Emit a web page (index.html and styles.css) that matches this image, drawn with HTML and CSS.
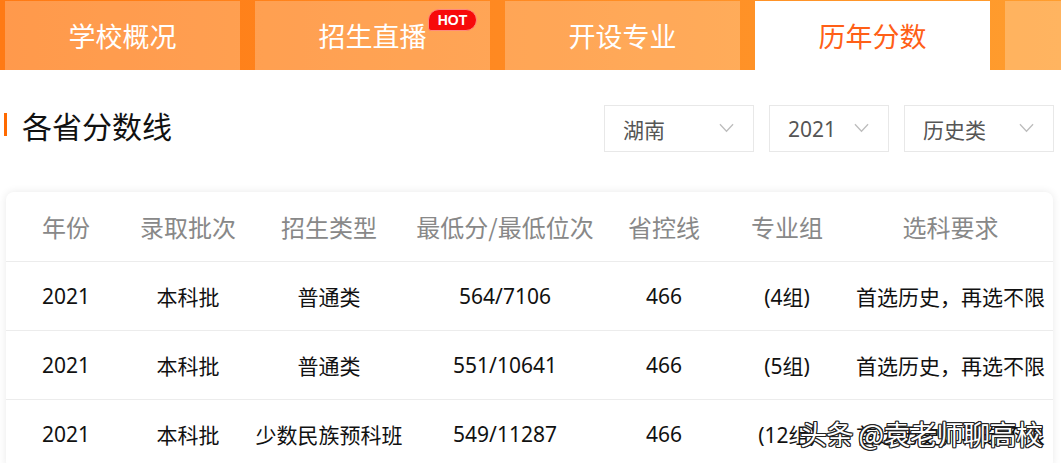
FILE: index.html
```html
<!DOCTYPE html>
<html lang="zh-CN">
<head>
<meta charset="utf-8">
<title>历年分数</title>
<link rel="stylesheet" href="styles.css">
</head>
<body>
<nav class="tabs">
  <div class="tab">学校概况</div>
  <div class="tab">招生直播<span class="hot">HOT</span></div>
  <div class="tab">开设专业</div>
  <div class="tab active">历年分数</div>
  <div class="tab"></div>
</nav>

<section class="head">
  <h2 class="title">各省分数线</h2>
  <div class="filters">
    <div class="select w150"><span>湖南</span><svg class="chev" viewBox="0 0 16 10"><path d="M1 1 L8 8.5 L15 1"/></svg></div>
    <div class="select w120"><span>2021</span><svg class="chev" viewBox="0 0 16 10"><path d="M1 1 L8 8.5 L15 1"/></svg></div>
    <div class="select w150"><span>历史类</span><svg class="chev" viewBox="0 0 16 10"><path d="M1 1 L8 8.5 L15 1"/></svg></div>
  </div>
</section>

<section class="card">
  <div class="row hdr">
    <div>年份</div><div>录取批次</div><div>招生类型</div><div>最低分/最低位次</div><div>省控线</div><div>专业组</div><div>选科要求</div>
  </div>
  <div class="row">
    <div>2021</div><div>本科批</div><div>普通类</div><div>564/7106</div><div>466</div><div>(4组)</div><div>首选历史，再选不限</div>
  </div>
  <div class="row">
    <div>2021</div><div>本科批</div><div>普通类</div><div>551/10641</div><div>466</div><div>(5组)</div><div>首选历史，再选不限</div>
  </div>
  <div class="row">
    <div>2021</div><div>本科批</div><div>少数民族预科班</div><div>549/11287</div><div>466</div><div>(12组)</div><div>首选历史，再选不限</div>
  </div>
</section>

<div class="watermark">头条 @袁老师聊高校</div>
</body>
</html>
```

FILE: styles.css
```css
* { box-sizing: border-box; margin: 0; padding: 0; }

html, body {
  width: 1061px;
  height: 463px;
  overflow: hidden;
  background: #fff;
}

body {
  position: relative;
  font-family: "Noto Sans", "Noto Sans CJK SC", sans-serif;
  color: #222;
}

.tabs {
  display: flex;
  gap: 15px;
  height: 70px;
  padding: 1px 0 0 5px;
  overflow: hidden;
  background: linear-gradient(90deg, #ff7a14 0%, #ff8a22 50%, #ff9d2e 100%);
}

.tab {
  position: relative;
  flex: 0 0 235px;
  height: 69px;
  display: flex;
  align-items: center;
  justify-content: center;
  background: rgba(255, 255, 255, 0.24);
  color: #fff;
  font-family: "Noto Sans CJK SC", sans-serif;
  font-size: 27px;
}

.tab.active {
  background: #fff;
  color: #ff5f17;
}

.hot {
  position: absolute;
  left: 173px;
  top: 8px;
  width: 49px;
  height: 22px;
  display: flex;
  align-items: center;
  justify-content: center;
  background: #f70a0a;
  border: 1px solid #ff8a7a;
  border-radius: 11px 11px 11px 3px;
  color: #fff;
  font-family: "Liberation Sans", sans-serif;
  font-weight: bold;
  font-size: 14px;
}

.head {
  display: flex;
  align-items: center;
  justify-content: space-between;
  height: 47px;
  margin-top: 35px;
  padding: 0 7px 0 4px;
}

.title {
  display: flex;
  align-items: center;
  font-family: "Noto Sans CJK SC", sans-serif;
  font-weight: normal;
  font-size: 30px;
  color: #111;
  margin-top: -8px;
}

.title::before {
  content: "";
  width: 3px;
  height: 23px;
  background: #ff6a00;
  margin-right: 15px;
}

.filters {
  display: flex;
  gap: 15px;
}

.select {
  display: flex;
  align-items: center;
  justify-content: space-between;
  height: 47px;
  padding: 0 19px 0 18px;
  border: 1px solid #e8e8e8;
  color: #555;
  font-family: "Noto Sans", "Noto Sans CJK SC", sans-serif;
  font-size: 21px;
}

.w150 { width: 150px; }
.w120 { width: 120px; }

.chev {
  width: 15px;
  height: 10px;
  fill: none;
  stroke: #bdbdbd;
  stroke-width: 1.4;
  margin-top: -2px;
}

.card {
  margin: 40px 8px 0 6px;
  background: #fff;
  border-radius: 8px;
  box-shadow: 0 0 8px rgba(0, 0, 0, 0.09);
  overflow: hidden;
}

.row {
  display: grid;
  grid-template-columns: 120px 124px 158px 194px 124px 122px 1fr;
  align-items: center;
  height: 69px;
  border-bottom: 1px solid #ececec;
  font-family: "Noto Sans", "Noto Sans CJK SC", sans-serif;
  font-size: 21px;
  color: #111;
  text-align: center;
}

.row.hdr {
  height: 70px;
  font-family: "Noto Sans CJK SC", sans-serif;
  font-size: 24px;
  color: #888;
}

.watermark {
  position: absolute;
  left: 800px;
  top: 414px;
  font-family: "Noto Sans CJK SC", sans-serif;
  font-size: 27px;
  color: #fff;
  letter-spacing: -0.5px;
  text-shadow:
    1px 1px 0 #222, -1px -1px 0 #222, 1px -1px 0 #222, -1px 1px 0 #222,
    0 1px 0 #222, 0 -1px 0 #222, 1px 0 0 #222, -1px 0 0 #222;
}
```
